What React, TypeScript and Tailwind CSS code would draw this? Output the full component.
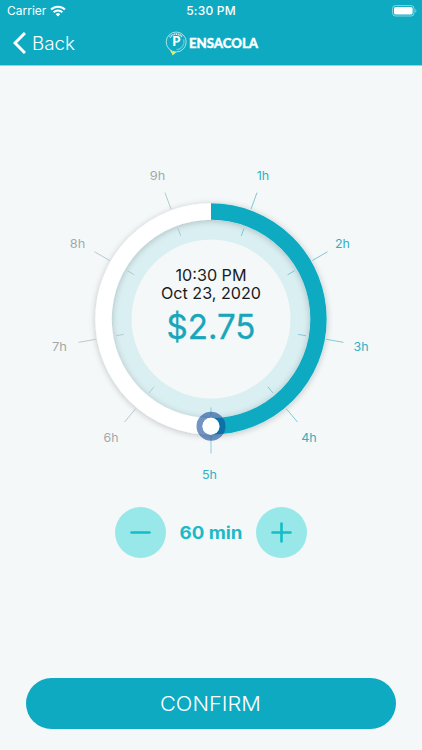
type HourMark = {
  label: string
  angle: number
  x: number
  y: number
  width: number
  active: boolean
}

const HOURS: HourMark[] = [
  { label: '1h', angle: 20, x: 52, y: -139, width: 12.5, active: true },
  { label: '2h', angle: 60, x: 131.5, y: -71, width: 15, active: true },
  { label: '3h', angle: 100, x: 150, y: 32, width: 15, active: true },
  { label: '4h', angle: 140, x: 98, y: 123, width: 15.5, active: true },
  { label: '5h', angle: 180, x: -1.5, y: 160, width: 15, active: true },
  { label: '6h', angle: 220, x: -100, y: 123, width: 15, active: false },
  { label: '7h', angle: 260, x: -151.5, y: 32, width: 15, active: false },
  { label: '8h', angle: 300, x: -133.5, y: -71, width: 15.5, active: false },
  { label: '9h', angle: 340, x: -53.5, y: -139, width: 15.5, active: false },
]

function StatusBar() {
  return (
    <div className="grid h-[22px] grid-cols-3 items-center pl-[7px] pr-[5px] text-[12px] leading-none">
      <div className="flex items-center gap-[4px]">
        <span className="text-[12px]">Carrier</span>
        <svg width="16" height="12" viewBox="0 0 16 12" fill="none" stroke="currentColor" strokeWidth="2">
          <path d="M1 4.5a10 10 0 0 1 14 0" />
          <path d="M3.6 7.2a6.3 6.3 0 0 1 8.8 0" />
          <path d="M8 11.6L5.7 9.2a3.3 3.3 0 0 1 4.6 0z" fill="currentColor" stroke="none" />
        </svg>
      </div>
      <span className="-ml-[2px] text-center text-[12px] font-medium tracking-[0.2px]">5:30 PM</span>
      <svg className="justify-self-end" width="25" height="12" viewBox="0 0 25 12">
        <rect x="0.6" y="0.6" width="21.4" height="10.4" rx="2.8" fill="none" stroke="white" strokeOpacity="0.5" />
        <rect x="2" y="2" width="18.6" height="7.6" rx="1.6" fill="white" />
        <path d="M23.3 4v3.8c1.4-.6 1.4-3.2 0-3.8z" fill="white" fillOpacity="0.5" />
      </svg>
    </div>
  )
}

function Logo() {
  return (
    <svg width="94" height="26" viewBox="0 0 94 26">
      <path d="M4.5 19.5L7.8 25.4L12 21.5z" fill="#e6e86a" />
      <circle cx="11.2" cy="12" r="10" fill="#0daac2" stroke="#a9e0e8" strokeWidth="1" />
      <path d="M4.8 7.4A8 8 0 0 1 17.4 7" fill="none" stroke="#c8edf1" strokeWidth="1.8" strokeDasharray="1.2 0.6" />
      <path d="M18.6 9.4A8 8 0 0 1 11.4 19.8" fill="none" stroke="#5cc6d3" strokeWidth="1.4" />
      <text x="11.4" y="16.2" textAnchor="middle" fill="white" className="font-['Lato',sans-serif] text-[13px] font-black">
        P
      </text>
      <text
        x="24"
        y="18"
        textLength="69"
        lengthAdjust="spacingAndGlyphs"
        fill="white"
        stroke="white"
        strokeWidth="0.35"
        className="font-['Lato',sans-serif] text-[13.3px] font-black"
      >
        ENSACOLA
      </text>
    </svg>
  )
}

function Header() {
  return (
    <header className="h-[66px] border-b border-[#8fd6e1] bg-[#0daac2] text-white">
      <StatusBar />
      <div className="grid h-[42px] grid-cols-3 items-center">
        <button className="flex items-center gap-[7px] pl-[13px]">
          <svg width="13" height="22" viewBox="0 0 13 22" fill="none" stroke="currentColor" strokeWidth="3">
            <path d="M12 1L2 11l10 10" />
          </svg>
          <svg width="44" height="22" viewBox="0 0 44 22">
            <text x="-1" y="17.7" textLength="43" lengthAdjust="spacingAndGlyphs" fill="white" className="text-[18px] font-light">
              Back
            </text>
          </svg>
        </button>
        <div className="flex justify-center pl-[2px]">
          <Logo />
        </div>
      </div>
    </header>
  )
}

function Dial() {
  return (
    <svg width="422" height="340" viewBox="-211 -164 422 340">
      <defs>
        <filter id="ringShadow" x="-20%" y="-20%" width="140%" height="140%">
          <feDropShadow dx="0" dy="1" stdDeviation="3" floodColor="#000" floodOpacity="0.22" />
        </filter>
      </defs>
      <circle r="100" fill="#daeff2" />
      <circle r="79.5" fill="#f4f8f9" />
      <g filter="url(#ringShadow)" fill="none" strokeWidth="16.4">
        <circle r="107.5" stroke="white" />
        <path d="M0 -107.5A107.5 107.5 0 0 1 0 107.5" stroke="#0daac2" />
      </g>
      {HOURS.map((hour) => (
        <g key={hour.label}>
          <g transform={`rotate(${hour.angle})`} stroke={hour.active ? '#6fc3cf' : '#adc3c8'} strokeWidth="0.8">
            <path d="M0 -88.5V-96.5M0 -117V-134.5" />
          </g>
          <text
            x={hour.x}
            y={hour.y}
            textAnchor="middle"
            textLength={hour.width}
            lengthAdjust="spacingAndGlyphs"
            fill={hour.active ? '#2fb1c3' : '#a4a8aa'}
            className="text-[12.3px]"
          >
            {hour.label}
          </text>
        </g>
      ))}
      <circle cy="107.3" r="11.5" fill="none" stroke="#0d4796" strokeOpacity="0.58" strokeWidth="6" />
      <circle cy="107.3" r="8.5" fill="#fdfefe" />
      <g textAnchor="middle" fill="#1a1b1c">
        <text y="-38.3" textLength="71" lengthAdjust="spacingAndGlyphs" className="text-[16px]">
          10:30 PM
        </text>
        <text y="-20.4" textLength="100" lengthAdjust="spacingAndGlyphs" className="text-[16px]">
          Oct 23, 2020
        </text>
        <text
          y="20"
          textLength="89"
          lengthAdjust="spacingAndGlyphs"
          fill="#18a6bb"
          stroke="#18a6bb"
          strokeWidth="0.3"
          className="text-[34px]"
        >
          $2.75
        </text>
      </g>
    </svg>
  )
}

function StepButton({ plus = false }: { plus?: boolean }) {
  return (
    <button className="flex size-[51px] items-center justify-center rounded-full bg-[#99e8e9]">
      <svg width="21" height="21" viewBox="0 0 21 21" stroke="#12bdc6" strokeWidth="2.6" strokeLinecap="round">
        <path d={plus ? 'M1.5 10.5h18M10.5 1.5v18' : 'M1.5 10.5h18'} />
      </svg>
    </button>
  )
}

export default function App() {
  return (
    <div className="flex h-[750px] w-[422px] flex-col overflow-hidden bg-[#f4f8f9] font-['Inter',sans-serif]">
      <Header />
      <main className="flex flex-1 flex-col items-center pt-[89px]">
        <Dial />
        <div className="mt-[12px] flex items-center gap-[13px]">
          <StepButton />
          <svg width="64" height="24" viewBox="0 0 64 24">
            <text
              x="32"
              y="18"
              textAnchor="middle"
              textLength="63"
              lengthAdjust="spacingAndGlyphs"
              fill="#1cb9c6"
              className="text-[17px] font-bold"
            >
              60 min
            </text>
          </svg>
          <StepButton plus />
        </div>
        <button className="mt-auto mb-[21px] flex h-[51px] w-[370px] items-center justify-center rounded-full bg-[#0daac2]">
          <svg width="102" height="26" viewBox="0 0 102 26">
            <text
              x="50.5"
              y="20.3"
              textAnchor="middle"
              textLength="101"
              lengthAdjust="spacingAndGlyphs"
              fill="white"
              className="text-[20px] font-light"
            >
              CONFIRM
            </text>
          </svg>
        </button>
      </main>
    </div>
  )
}
